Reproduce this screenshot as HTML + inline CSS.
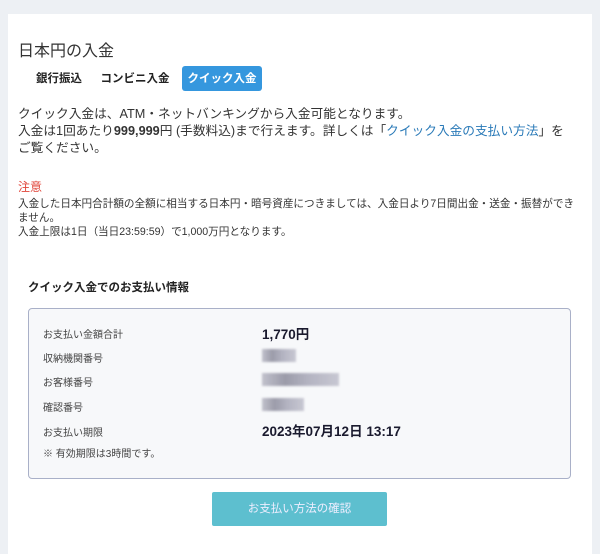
<!DOCTYPE html><html><head><meta charset="utf-8"><style>
body{margin:0;width:600px;height:536px;background:#edf0f4;font-family:"Liberation Sans","Noto Sans CJK JP",sans-serif;color:#222;overflow:hidden;position:relative}
.card{position:absolute;left:8px;top:14px;width:584px;height:540px;background:#fff}
.a{position:absolute;white-space:nowrap}
.tab{position:absolute;top:52px;height:25px;line-height:27px;font-size:11.5px;font-weight:bold;text-align:center}
.box{position:absolute;left:20px;top:294px;width:541px;height:169px;background:#f7f8fa;border:1px solid #a9b0c8;border-radius:4px}
.l{position:absolute;left:14px;font-size:10px;color:#444}
.v{position:absolute;left:233px;font-size:13.5px;font-weight:bold;color:#1a1a2e}
.blur{position:absolute;left:233px;height:13px;background:linear-gradient(90deg,#b8b8c4,#8c8c9c 30%,#a8a8b8 60%,#c0c0cc);filter:blur(1px);opacity:.85}
</style></head><body><div class="card">
<div class="a" style="left:10px;top:23px;font-size:16px;color:#333">日本円の入金</div>
<div class="tab" style="left:24px;width:54px">銀行振込</div>
<div class="tab" style="left:90px;width:74px">コンビニ入金</div>
<div class="tab" style="left:174px;width:80px;background:#3597de;color:#fff;border-radius:3px">クイック入金</div>
<div class="a" style="left:10px;top:92px;font-size:12.7px;line-height:17px;color:#333">クイック入金は、ATM・ネットバンキングから入金可能となります。<br>入金は1回あたり<b>999,999</b>円 (手数料込)まで行えます。詳しくは「<span style="color:#2a7ab8">クイック入金の支払い方法</span>」を<br>ご覧ください。</div>
<div class="a" style="left:10px;top:164px;font-size:12px;color:#e0453a">注意</div>
<div class="a" style="left:10px;top:183px;font-size:10.6px;line-height:14px;color:#333">入金した日本円合計額の全額に相当する日本円・暗号資産につきましては、入金日より7日間出金・送金・振替ができ<br>ません。<br>入金上限は1日（当日23:59:59）で1,000万円となります。</div>
<div class="a" style="left:20px;top:265px;font-size:11.5px;font-weight:bold">クイック入金でのお支払い情報</div>
<div class="box">
<div class="l" style="top:17px">お支払い金額合計</div><div class="v" style="top:14px">1,770円</div>
<div class="l" style="top:41px">収納機関番号</div><div class="blur" style="top:40px;width:34px"></div>
<div class="l" style="top:65px">お客様番号</div><div class="blur" style="top:64px;width:77px"></div>
<div class="l" style="top:90px">確認番号</div><div class="blur" style="top:89px;width:42px"></div>
<div class="l" style="top:115px">お支払い期限</div><div class="v" style="top:111px">2023年07月12日 13:17</div>
<div class="l" style="top:136px">※ 有効期限は3時間です。</div>
</div>
<div class="a" style="left:204px;top:478px;width:175px;height:34px;line-height:34px;text-align:center;background:#5dbfcf;color:#eef;font-size:11.5px;border-radius:2px">お支払い方法の確認</div>
</div></body></html>
